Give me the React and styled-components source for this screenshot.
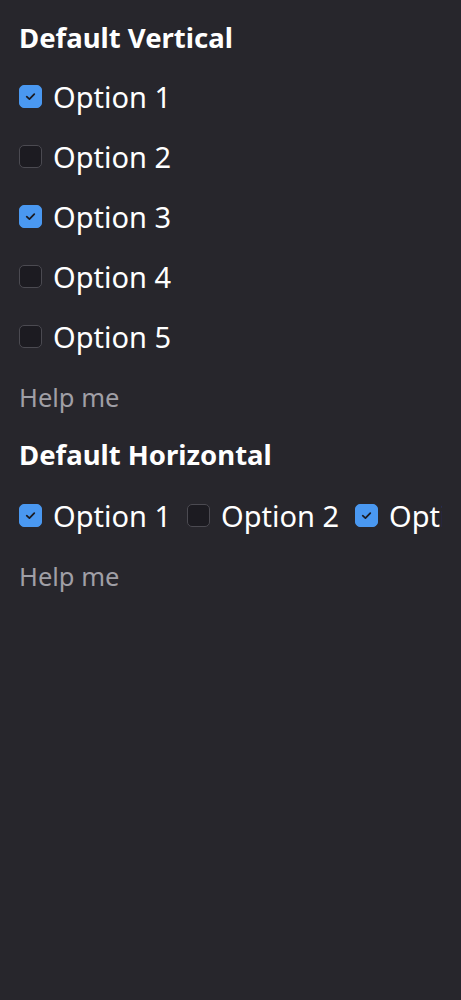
import styled, { createGlobalStyle } from "styled-components"

const Global = createGlobalStyle`
  html, body {
    margin: 0;
    padding: 0;
    background: #27262c;
  }
  body {
    font-family: "Noto Sans", "Open Sans", sans-serif;
    color: #ffffff;
  }
`

const Page = styled.div`
  min-height: 1000px;
  box-sizing: border-box;
  padding: 20px 19px;
  background: #27262c;
  display: flex;
  flex-direction: column;
  gap: 20px;
`

const Title = styled.h2`
  margin: 0;
  font-size: 27.5px;
  line-height: 36px;
  font-weight: 700;
  color: #ffffff;
`

const Group = styled.div`
  display: flex;
  flex-direction: ${p => (p.horizontal ? "row" : "column")};
  gap: ${p => (p.horizontal ? "16px" : "20px")};
  margin-top: ${p => (p.horizontal ? "2px" : "0")};
  overflow: hidden;
  white-space: nowrap;
`

const Option = styled.label`
  display: flex;
  align-items: center;
  gap: 11px;
  height: 40px;
  flex-shrink: 0;
  font-size: 29px;
  color: #ffffff;
`

const Box = styled.span`
  width: 23px;
  height: 23px;
  box-sizing: border-box;
  border-radius: 5px;
  flex-shrink: 0;
  display: flex;
  align-items: center;
  justify-content: center;
  background: ${p => (p.checked ? "#4a98f1" : "#1c1b21")};
  border: 1px solid ${p => (p.checked ? "#4a98f1" : "#4b4a51")};
`

const Help = styled.div`
  font-size: 25.5px;
  line-height: 40px;
  margin-top: 1px;
  color: #a09fa6;
`

const Check = () => (
  <svg width="13" height="13" viewBox="0 0 12 12" fill="none">
    <path d="M2.5 6.2 L5 8.5 L9.5 3.8" stroke="#1c1b21" strokeWidth="1.6" strokeLinecap="round" strokeLinejoin="round" />
  </svg>
)

const Checkbox = ({ label, checked }) => (
  <Option>
    <Box checked={checked}>{checked && <Check />}</Box>
    {label}
  </Option>
)

const vertical = [
  { label: "Option 1", checked: true },
  { label: "Option 2", checked: false },
  { label: "Option 3", checked: true },
  { label: "Option 4", checked: false },
  { label: "Option 5", checked: false },
]

const horizontal = [
  { label: "Option 1", checked: true },
  { label: "Option 2", checked: false },
  { label: "Option 3", checked: true },
]

export default function App() {
  return (
    <>
      <Global />
      <Page>
        <Title>Default Vertical</Title>
        <Group>
          {vertical.map(o => <Checkbox key={o.label} {...o} />)}
        </Group>
        <Help>Help me</Help>
        <Title>Default Horizontal</Title>
        <Group horizontal>
          {horizontal.map(o => <Checkbox key={o.label} {...o} />)}
        </Group>
        <Help>Help me</Help>
      </Page>
    </>
  )
}
